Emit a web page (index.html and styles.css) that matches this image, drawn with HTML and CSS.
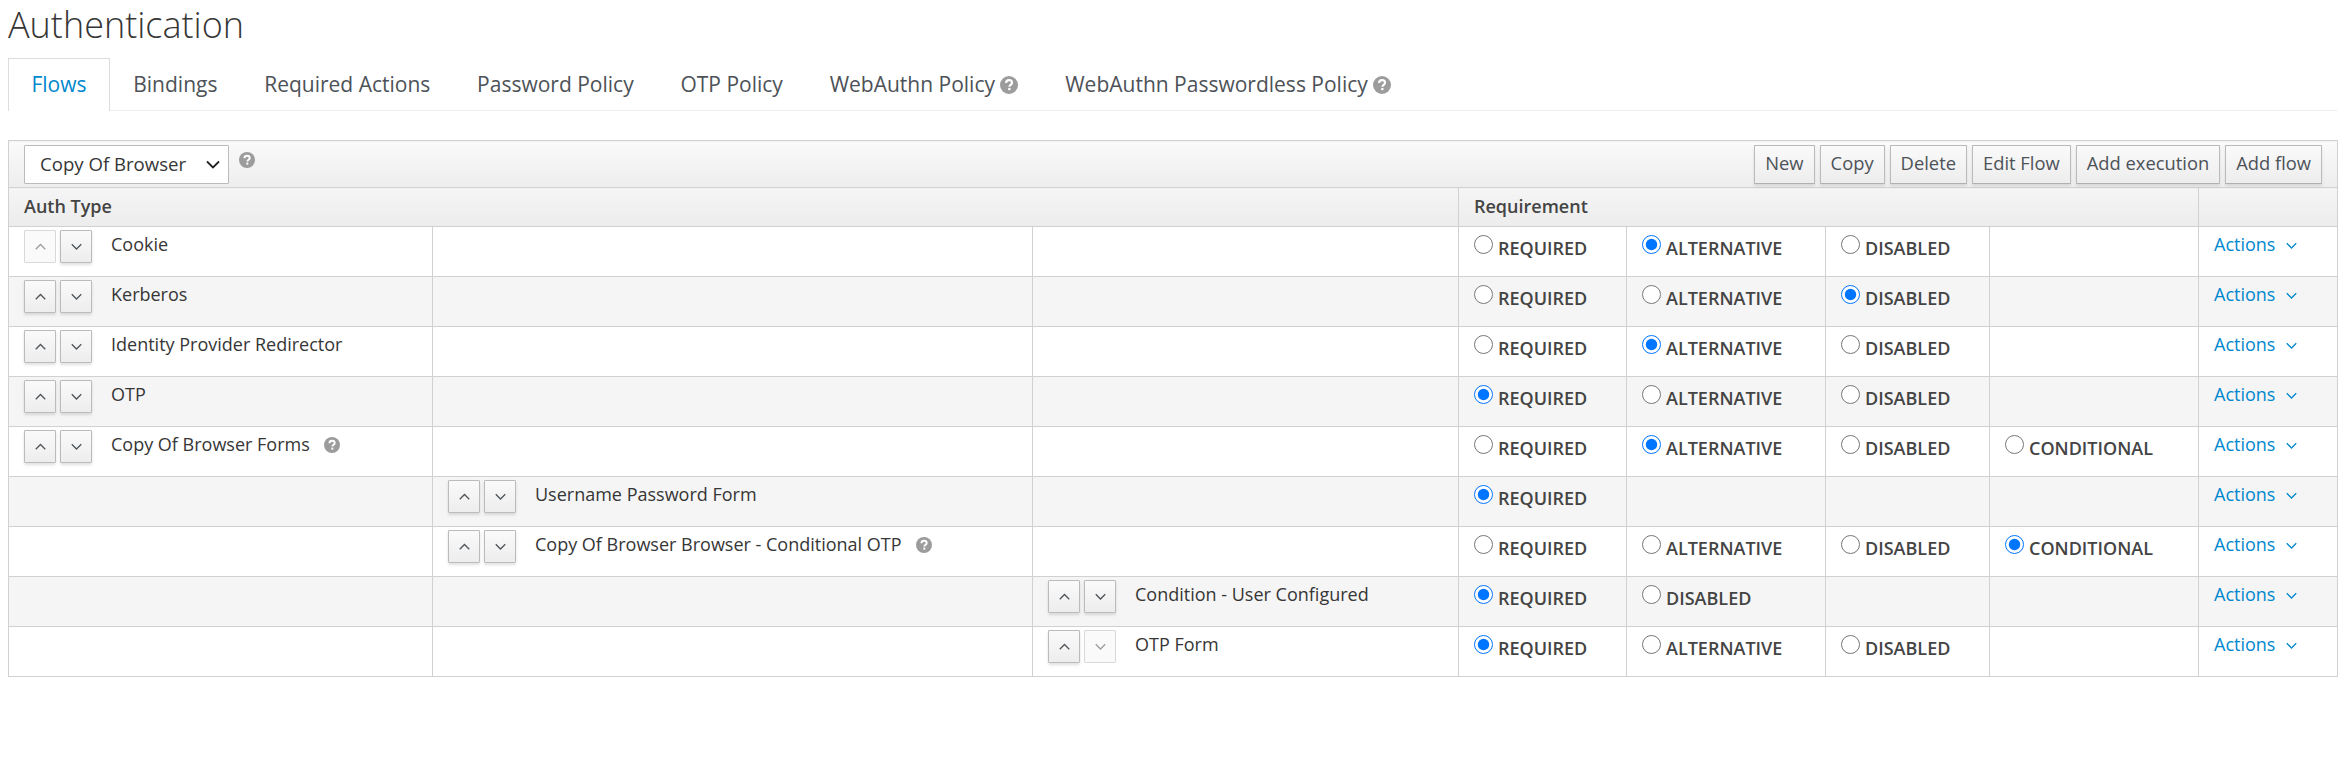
FILE: index.html
```html
<!DOCTYPE html>
<html lang="en">
<head>
<meta charset="utf-8">
<title>Authentication</title>
<link rel="stylesheet" href="styles.css">
</head>
<body>
<svg class="defs" width="0" height="0" aria-hidden="true">
  <defs>
    <symbol id="up" viewBox="0 0 12 12"><path d="M2.2 8.2 6 4.4l3.8 3.8" fill="none" stroke="currentColor" stroke-width="1"/></symbol>
    <symbol id="down" viewBox="0 0 12 12"><path d="M2.2 4.2 6 8l3.8-3.8" fill="none" stroke="currentColor" stroke-width="1"/></symbol>
    <symbol id="help" viewBox="0 0 16 16"><circle cx="8" cy="8" r="8" fill="#9c9c9c"/><path d="M5.4 6.2c0-1.7 1.2-2.5 2.7-2.5s2.6.9 2.6 2.2c0 1.9-2.3 1.9-2.3 3.6" fill="none" stroke="#fff" stroke-width="1.9"/><rect x="7.3" y="10.6" width="2" height="2" fill="#fff"/></symbol>
  </defs>
</svg>
<h1 class="title">Authentication</h1>
<ul class="tabs">
  <li class="tab active"><a href="#">Flows</a></li>
  <li class="tab"><a href="#">Bindings</a></li>
  <li class="tab"><a href="#">Required Actions</a></li>
  <li class="tab"><a href="#">Password Policy</a></li>
  <li class="tab"><a href="#">OTP Policy</a></li>
  <li class="tab"><a href="#">WebAuthn Policy <svg class="help tab-help"><use href="#help"/></svg></a></li>
  <li class="tab"><a href="#">WebAuthn Passwordless Policy <svg class="help tab-help"><use href="#help"/></svg></a></li>
</ul>
<table class="flows">
  <colgroup>
    <col class="c1"><col class="c2"><col class="c3"><col class="c4"><col class="c5"><col class="c6"><col class="c7"><col class="c8">
  </colgroup>
  <thead>
    <tr class="toolbar">
      <th colspan="8">
        <div class="toolbar-in">
          <div class="toolbar-left">
            <select class="flow-select"><option>Copy Of Browser</option></select>
            <svg class="help tool-help"><use href="#help"/></svg>
          </div>
          <div class="toolbar-right">
            <button class="btn">New</button>
            <button class="btn">Copy</button>
            <button class="btn">Delete</button>
            <button class="btn">Edit Flow</button>
            <button class="btn">Add execution</button>
            <button class="btn">Add flow</button>
          </div>
        </div>
      </th>
    </tr>
    <tr class="head">
      <th colspan="3">Auth Type</th>
      <th colspan="4">Requirement</th>
      <th></th>
    </tr>
  </thead>
  <tbody>
    <tr>
      <td><div class="item"><button class="arrow off"><svg><use href="#up"/></svg></button><button class="arrow"><svg><use href="#down"/></svg></button><span class="name">Cookie</span></div></td>
      <td></td><td></td>
      <td><label class="opt"><input type="radio" name="r1">REQUIRED</label></td>
      <td><label class="opt"><input type="radio" name="r1" checked>ALTERNATIVE</label></td>
      <td><label class="opt"><input type="radio" name="r1">DISABLED</label></td>
      <td></td>
      <td><a class="actions" href="#">Actions <svg><use href="#down"/></svg></a></td>
    </tr>
    <tr>
      <td><div class="item"><button class="arrow"><svg><use href="#up"/></svg></button><button class="arrow"><svg><use href="#down"/></svg></button><span class="name">Kerberos</span></div></td>
      <td></td><td></td>
      <td><label class="opt"><input type="radio" name="r2">REQUIRED</label></td>
      <td><label class="opt"><input type="radio" name="r2">ALTERNATIVE</label></td>
      <td><label class="opt"><input type="radio" name="r2" checked>DISABLED</label></td>
      <td></td>
      <td><a class="actions" href="#">Actions <svg><use href="#down"/></svg></a></td>
    </tr>
    <tr>
      <td><div class="item"><button class="arrow"><svg><use href="#up"/></svg></button><button class="arrow"><svg><use href="#down"/></svg></button><span class="name">Identity Provider Redirector</span></div></td>
      <td></td><td></td>
      <td><label class="opt"><input type="radio" name="r3">REQUIRED</label></td>
      <td><label class="opt"><input type="radio" name="r3" checked>ALTERNATIVE</label></td>
      <td><label class="opt"><input type="radio" name="r3">DISABLED</label></td>
      <td></td>
      <td><a class="actions" href="#">Actions <svg><use href="#down"/></svg></a></td>
    </tr>
    <tr>
      <td><div class="item"><button class="arrow"><svg><use href="#up"/></svg></button><button class="arrow"><svg><use href="#down"/></svg></button><span class="name">OTP</span></div></td>
      <td></td><td></td>
      <td><label class="opt"><input type="radio" name="r4" checked>REQUIRED</label></td>
      <td><label class="opt"><input type="radio" name="r4">ALTERNATIVE</label></td>
      <td><label class="opt"><input type="radio" name="r4">DISABLED</label></td>
      <td></td>
      <td><a class="actions" href="#">Actions <svg><use href="#down"/></svg></a></td>
    </tr>
    <tr>
      <td><div class="item"><button class="arrow"><svg><use href="#up"/></svg></button><button class="arrow"><svg><use href="#down"/></svg></button><span class="name">Copy Of Browser Forms</span><svg class="help row-help"><use href="#help"/></svg></div></td>
      <td></td><td></td>
      <td><label class="opt"><input type="radio" name="r5">REQUIRED</label></td>
      <td><label class="opt"><input type="radio" name="r5" checked>ALTERNATIVE</label></td>
      <td><label class="opt"><input type="radio" name="r5">DISABLED</label></td>
      <td><label class="opt"><input type="radio" name="r5">CONDITIONAL</label></td>
      <td><a class="actions" href="#">Actions <svg><use href="#down"/></svg></a></td>
    </tr>
    <tr>
      <td></td>
      <td><div class="item"><button class="arrow"><svg><use href="#up"/></svg></button><button class="arrow"><svg><use href="#down"/></svg></button><span class="name">Username Password Form</span></div></td>
      <td></td>
      <td><label class="opt"><input type="radio" name="r6" checked>REQUIRED</label></td>
      <td></td><td></td><td></td>
      <td><a class="actions" href="#">Actions <svg><use href="#down"/></svg></a></td>
    </tr>
    <tr>
      <td></td>
      <td><div class="item"><button class="arrow"><svg><use href="#up"/></svg></button><button class="arrow"><svg><use href="#down"/></svg></button><span class="name">Copy Of Browser Browser - Conditional OTP</span><svg class="help row-help"><use href="#help"/></svg></div></td>
      <td></td>
      <td><label class="opt"><input type="radio" name="r7">REQUIRED</label></td>
      <td><label class="opt"><input type="radio" name="r7">ALTERNATIVE</label></td>
      <td><label class="opt"><input type="radio" name="r7">DISABLED</label></td>
      <td><label class="opt"><input type="radio" name="r7" checked>CONDITIONAL</label></td>
      <td><a class="actions" href="#">Actions <svg><use href="#down"/></svg></a></td>
    </tr>
    <tr>
      <td></td><td></td>
      <td><div class="item"><button class="arrow"><svg><use href="#up"/></svg></button><button class="arrow"><svg><use href="#down"/></svg></button><span class="name">Condition - User Configured</span></div></td>
      <td><label class="opt"><input type="radio" name="r8" checked>REQUIRED</label></td>
      <td><label class="opt"><input type="radio" name="r8">DISABLED</label></td>
      <td></td><td></td>
      <td><a class="actions" href="#">Actions <svg><use href="#down"/></svg></a></td>
    </tr>
    <tr>
      <td></td><td></td>
      <td><div class="item"><button class="arrow"><svg><use href="#up"/></svg></button><button class="arrow off"><svg><use href="#down"/></svg></button><span class="name">OTP Form</span></div></td>
      <td><label class="opt"><input type="radio" name="r9" checked>REQUIRED</label></td>
      <td><label class="opt"><input type="radio" name="r9">ALTERNATIVE</label></td>
      <td><label class="opt"><input type="radio" name="r9">DISABLED</label></td>
      <td></td>
      <td><a class="actions" href="#">Actions <svg><use href="#down"/></svg></a></td>
    </tr>
  </tbody>
</table>
</body>
</html>
```
FILE: styles.css
```css
* { box-sizing: border-box; }
html, body { margin: 0; padding: 0; }
body {
  padding: 0 7px 0 8px;
  background: #fff;
  color: #363636;
  font-family: "Open Sans", "Liberation Sans", sans-serif;
  font-size: 18px;
  line-height: 1.66;
}
.defs { position: absolute; }
.title {
  margin: 0;
  height: 58px;
  padding-top: 1px;
  font-size: 36px;
  font-weight: 300;
  line-height: 47px;
}
.tabs {
  display: flex;
  list-style: none;
  margin: 0 0 29px;
  padding: 0;
  height: 53px;
  border-bottom: 1px solid #ededed;
}
.tab a {
  display: block;
  height: 53px;
  padding: 0 22.4px;
  border: 1px solid transparent;
  border-bottom: 0;
  color: #4d5258;
  text-decoration: none;
  font-size: 21px;
  line-height: 50px;
  white-space: nowrap;
}
.tab.active a {
  background: #fff;
  border-color: #ddd;
  color: #0088ce;
  position: relative;
}
.help { width: 16px; height: 16px; vertical-align: -1px; }
.tab-help { width: 18px; height: 18px; vertical-align: -2px; }
.flows {
  table-layout: fixed;
  border-collapse: collapse;
  width: 2329px;
  border: 1px solid #d1d1d1;
}
.c1 { width: 424px; }
.c2 { width: 600px; }
.c3 { width: 426px; }
.c4 { width: 168px; }
.c5 { width: 199px; }
.c6 { width: 164px; }
.c7 { width: 209px; }
.c8 { width: 139px; }
.toolbar th {
  height: 47px;
  padding: 3px 15px;
  background: linear-gradient(#fafafa, #ededed);
  border: 1px solid #d1d1d1;
  font-weight: 400;
}
.toolbar-in { display: flex; justify-content: space-between; align-items: flex-start; }
.toolbar-left { display: flex; align-items: flex-start; }
.flow-select {
  appearance: none;
  width: 205px;
  height: 39px;
  padding: 0 15px 2px;
  background: #fff url("data:image/svg+xml,%3Csvg xmlns='http://www.w3.org/2000/svg' width='14' height='9' viewBox='0 0 14 9'%3E%3Cpath d='M1 1.5 7 7.5l6-6' fill='none' stroke='%23222' stroke-width='1.8'/%3E%3C/svg%3E") no-repeat right 8px center;
  border: 1px solid #bbb;
  border-radius: 1px;
  color: #363636;
  font-family: inherit;
  font-size: 18.6px;
  font-weight: 500;
}
.tool-help { margin: 7px 0 0 10px; }
.toolbar-right { display: flex; gap: 5px; }
.btn {
  height: 39px;
  padding: 0 10px 2px;
  background: linear-gradient(#fafafa, #ededed);
  border: 1px solid #bbb;
  border-bottom-color: #b0b0b0;
  border-radius: 1px;
  box-shadow: 0 2px 3px rgba(3, 3, 3, .1);
  color: #4d5258;
  font-family: inherit;
  font-size: 18.35px;
  font-weight: 500;
  line-height: 1;
  white-space: nowrap;
}
.head th {
  height: 39px;
  padding: 0 15px;
  background: linear-gradient(#f5f5f5, #ececec);
  border: 1px solid #d1d1d1;
  border-top: 0;
  color: #444;
  font-size: 18px;
  font-weight: 600;
  text-align: left;
}
tbody td {
  height: 50px;
  padding: 0 15px;
  border: 1px solid #d1d1d1;
  vertical-align: top;
}
tbody tr:nth-child(even) td { background: #f5f5f5; }
.item { display: flex; align-items: flex-start; padding-top: 3px; white-space: nowrap; }
.arrow {
  width: 32px;
  height: 33px;
  margin-right: 4px;
  padding: 0;
  background: linear-gradient(#fafafa, #ededed);
  border: 1px solid #bbb;
  border-radius: 1px;
  box-shadow: 0 2px 3px rgba(3, 3, 3, .12);
  color: #4d5258;
  display: flex;
  align-items: center;
  justify-content: center;
}
.arrow svg { width: 15px; height: 15px; }
.arrow.off {
  background: #fafafa;
  border-color: #d9d9d9;
  box-shadow: none;
  color: #9c9c9c;
}
.name { margin-left: 15px; line-height: 28px; }
.row-help { margin: 7px 0 0 14px; }
.opt {
  display: flex;
  align-items: flex-start;
  color: #444;
  font-weight: 600;
  line-height: 30px;
  padding-top: 6px;
  white-space: nowrap;
}
.opt input {
  width: 19px;
  height: 19px;
  margin: 2px 5px 0 0;
  flex: none;
}
.actions {
  display: block;
  padding-top: 2px;
  color: #0088ce;
  text-decoration: none;
  line-height: 30px;
  white-space: nowrap;
}
.actions svg { width: 15px; height: 15px; margin-left: 4px; vertical-align: -2px; }
```
